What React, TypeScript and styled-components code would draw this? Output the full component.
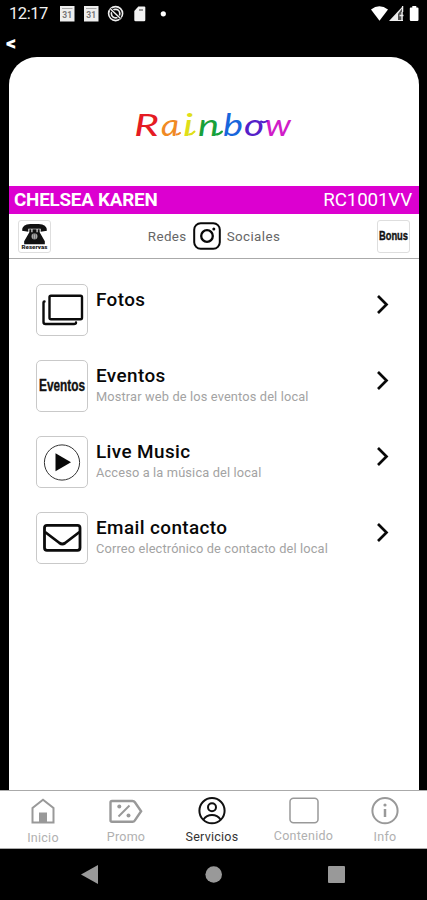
import React from 'react';
import styled, { createGlobalStyle } from 'styled-components';

const GlobalStyle = createGlobalStyle`
  * { box-sizing: border-box; }
  body { margin: 0; background: #000; font-family: Roboto, sans-serif; }
  svg { display: block; flex: none; overflow: visible; }
`;

const Screen = styled.div`
  width: 427px;
  height: 900px;
  display: flex;
  flex-direction: column;
  background: #000;
  overflow: hidden;
`;
const StatusBar = styled.div`
  height: 28px;
  display: flex;
  justify-content: space-between;
  color: #f2f2f2;
`;
const Clock = styled.span`
  width: 51px;
  padding-left: 9px;
  font-size: 16.5px;
  line-height: 28px;
  letter-spacing: -0.45px;
`;
const StatusGroup = styled.div`
  display: flex;
`;
const BackRow = styled.div`
  height: 29px;
  padding-left: 6px;
  color: #fff;
  font-size: 20px;
  font-weight: 900;
  line-height: 30px;
`;
const Card = styled.main`
  flex: 1;
  margin: 0 8px 0 9px;
  background: #fff;
  border-radius: 28px 28px 0 0;
  display: flex;
  flex-direction: column;
  overflow: hidden;
`;
const LogoArea = styled.div`
  height: 129px;
  flex: none;
  display: flex;
  justify-content: center;
  padding-top: 43px;
`;
const Banner = styled.div`
  height: 28px;
  flex: none;
  padding: 0 7px 0 5px;
  display: flex;
  justify-content: space-between;
  background: #dc00d0;
  color: #fff;
  font-size: 18.8px;
  line-height: 28px;
`;
const Member = styled.span`
  font-weight: 700;
  letter-spacing: -0.2px;
`;
const Code = styled.span`
  letter-spacing: -0.15px;
`;
const Social = styled.div`
  height: 45px;
  flex: none;
  padding: 0 9px;
  display: flex;
  align-items: center;
  justify-content: space-between;
  border-bottom: 1px solid #aaa;
`;
const SocialLinks = styled.div`
  display: flex;
  align-items: center;
  gap: 6px;
  color: #666;
  font-size: 13.4px;
  letter-spacing: 0.4px;
`;
const Tile = styled.div<{ $size: number }>`
  width: ${(p) => p.$size}px;
  height: ${(p) => p.$size}px;
  flex: none;
  display: flex;
  align-items: center;
  justify-content: center;
  border: 1px solid ${(p) => (p.$size > 40 ? '#c9c9c9' : '#dedede')};
  border-radius: ${(p) => (p.$size > 40 ? 5 : 3)}px;
`;
const List = styled.div`
  padding: 24.5px 30px 0 26.5px;
  display: flex;
  flex-direction: column;
  gap: 24px;
`;
const Item = styled.div`
  height: 52px;
  display: flex;
`;
const ItemText = styled.div`
  flex: 1;
  padding: 4.5px 0 0 8.5px;
`;
const Title = styled.div`
  font-size: 18.9px;
  line-height: 24px;
  font-weight: 500;
  letter-spacing: 0.4px;
  color: #080808;
`;
const Subtitle = styled.div`
  margin-top: 1px;
  font-size: 12.8px;
  line-height: 16px;
  letter-spacing: 0.15px;
  color: #a3a3a3;
`;
const ChevronBox = styled.div`
  padding-top: 11px;
`;
const Tabs = styled.nav`
  height: 59px;
  flex: none;
  display: grid;
  grid-template-columns: 86px 80px 92px 91px 72px;
  background: #fff;
  border-top: 1px solid #aaa;
  border-bottom: 1px solid #aaa;
`;
const Tab = styled.div<{ $active?: boolean }>`
  display: flex;
  flex-direction: column;
  align-items: center;
  padding-top: 4px;
  color: ${(p) => (p.$active ? '#111' : '#999')};
`;
const TabLabel = styled.span<{ $top: number; $active?: boolean }>`
  margin-top: ${(p) => p.$top}px;
  color: ${(p) => (p.$active ? '#333' : '#b0b0b0')};
  font-size: 12.5px;
  line-height: 15px;
  letter-spacing: 0.25px;
`;
const SystemBar = styled.div`
  height: 51px;
  flex: none;
  background: #000;
`;

/* Letter, colour, left edge, stretched advance */
const logo: [string, string, number, number][] = [
  ['R', '#e51b23', 2, 25], ['a', '#f08a24', 29, 18], ['i', '#e0df18', 51, 10],
  ['n', '#18a13a', 66, 21], ['b', '#1766dc', 91, 20], ['o', '#5520c8', 112, 20], ['w', '#d01cc8', 133, 26],
];

const Logo = () => (
  <svg width="164" height="48" viewBox="0 0 164 48">
    {logo.map(([char, color, x, width]) => (
      <text key={char} x={x} y="35.5" fill={color} fontFamily="Lato, sans-serif" fontStyle="italic"
        fontSize="31" textLength={width} lengthAdjust="spacingAndGlyphs">{char}</text>
    ))}
    <g fill="none" strokeWidth="2" strokeLinecap="round">
      <path d="M44.5 34.5q2 0 3.500-1.500" stroke="#f08a24" />
      <path d="M57 34.500q3 0 5.500-3" stroke="#e0df18" />
      <path d="M83.500 34.500q4 0 6.500-3" stroke="#18a13a" />
      <path d="M129 21.500q3 1.500 6-.5" stroke="#5520c8" />
    </g>
  </svg>
);

const StatusIcons = () => (
  <svg width="120" height="28" viewBox="51 0 120 28">
    {[60, 84].map((x) => (
      <g key={x}>
        <path d={`M${x} 6h14.5v15.5H${x}z`} fill="#eee" />
        <path d={`M${x + 2} 8.5h10.5`} stroke="#aaa" />
        <text x={x + 7.2} y="18" fontSize="8.5" fontWeight="700" fill="#777" textAnchor="middle">31</text>
      </g>
    ))}
    <circle cx="115.6" cy="13.6" r="7" fill="none" stroke="#eee" strokeWidth="1.6" />
    <circle cx="115.6" cy="13.6" r="4.2" fill="none" stroke="#eee" strokeWidth="1.7" />
    <path d="M110.5 9l10 9.5" stroke="#000" strokeWidth="3" />
    <path d="M110.5 9l10 9.5" stroke="#eee" strokeWidth="1.5" />
    <path d="M138.3 6.5h6q1 0 1 1V20q0 1.2-1.2 1.2h-8.5q-1.3 0-1.3-1.2v-9z" fill="#f2f2f2" />
    <path d="M139 10h4" stroke="#666" strokeWidth="1.3" />
    <circle cx="163.3" cy="13.8" r="2.6" fill="#fff" />
  </svg>
);

const SignalIcons = () => (
  <svg width="60" height="28" viewBox="367 0 60 28">
    <path d="M371 9.5Q379.3 2.8 388 9.5L379.5 20.7z" fill="#fff" />
    <path d="M403 6v15h-14z" fill="#eee" />
    <path d="M403 7v13h-5v-6z" fill="#000" opacity=".65" />
    <path d="M402.6 6v6M399.5 15.5h4M402 12v9" stroke="#eee" strokeWidth="1.3" />
    <path d="M412.3 6h4v1.6h1.2q1 0 1 1v11.2q0 1.2-1.2 1.2h-6.3q-1.2 0-1.2-1.2V8.600q0-1 1-1h1.500z" fill="#fff" />
  </svg>
);

const PhoneIcon = () => (
  <svg width="31" height="31" viewBox="0 0 30 30">
    <path d="M3 9.500Q3 3 11 3h8q8 0 8 6.500l-6 .8V7.500H9v2.800z" fill="#111" />
    <path d="M10 8h2v3h1V8h4v3h1V8h2v3l5 8.500v3H5v-3l5-8.500z" fill="#111" />
    <circle cx="15" cy="14.800" r="3" fill="#777" />
    <path d="M13 13v4m2-4v4m2-4v4" stroke="#ccc" strokeWidth=".6" />
    <text x="2.500" y="27.500" fontSize="6" fontWeight="900" textLength="25" lengthAdjust="spacingAndGlyphs" fill="#222">Reservas</text>
  </svg>
);

const WordIcon = ({ word, width, size }: { word: string; width: number; size: number }) => (
  <svg width={width} height="24" viewBox={`0 0 ${width} 24`}>
    <text x="0" y={size > 14 ? 17 : 15.5} fontFamily="Liberation Sans, sans-serif" fontWeight="700" fontSize={size}
      textLength={width} lengthAdjust="spacingAndGlyphs" fill="#111" stroke="#111" strokeWidth=".4">{word}</text>
  </svg>
);

const Instagram = () => (
  <svg width="28" height="28" viewBox="0 0 28 28" fill="none" stroke="#080808" strokeWidth="2">
    <rect x="1.200" y="1.200" width="25.600" height="25.600" rx="6.500" />
    <circle cx="14" cy="14" r="5.800" strokeWidth="2.300" />
    <circle cx="20.800" cy="7" r="1.500" fill="#080808" stroke="none" />
  </svg>
);

const PhotosIcon = () => (
  <svg width="50" height="50" viewBox="0 0 50 50" fill="none" stroke="#0b0b0b" strokeWidth="2.400" strokeLinecap="round">
    <rect x="12.500" y="10.800" width="32.500" height="23.400" rx="1.500" />
    <path d="M7.500 16.500q-1 0-1 1V37q0 2 2 2H37q2 0 2-1.500" />
  </svg>
);
const PlayIcon = () => (
  <svg width="50" height="50" viewBox="0 0 50 50">
    <circle cx="25" cy="25.500" r="17.600" fill="none" stroke="#333" strokeWidth="1" />
    <path d="M18.500 16.200v18L34 25.200z" fill="#080808" />
  </svg>
);
const MailIcon = () => (
  <svg width="50" height="50" viewBox="0 0 50 50" fill="none" stroke="#0b0b0b" strokeWidth="2.800" strokeLinejoin="round">
    <rect x="7.500" y="12.300" width="35.500" height="25" rx="2.500" />
    <path d="M8 19l14.500 11q2.800 2 5.600 0L42.500 19" />
  </svg>
);
const Chevron = () => (
  <svg width="13" height="20" viewBox="0 0 13 20" fill="none" stroke="#080808" strokeWidth="2.700">
    <path d="M2 1l8.500 8.500L2 18" />
  </svg>
);

const TabIcon = ({ kind }: { kind: string }) => (
  <svg width="36" height="32" viewBox="0 0 36 32" fill="none" stroke="currentColor" strokeWidth="2">
    {kind === 'home' && <><path d="M7.500 27.500V13L18 4.700 28.500 13v14.500z" strokeWidth="2" /><path d="M14 17.500h8v10h-8z" fill="currentColor" stroke="none" /></>}
    {kind === 'promo' && <><path d="M4 6h20.500q1.500 0 2.400 1.300l6.200 9-6.200 9q-.9 1.500-2.400 1.500H4q-1.500 0-1.500-1.500V7.500Q2.500 6 4 6z" strokeWidth="2.400" /><path d="M10.500 21.500l11-11" /><circle cx="11.300" cy="11.500" r="2" fill="currentColor" stroke="none" /><circle cx="20.500" cy="20.500" r="2" fill="currentColor" stroke="none" /></>}
    {kind === 'user' && <><circle cx="18" cy="15.700" r="12.600" /><circle cx="18" cy="12.300" r="4" /><path d="M9.500 24.500q3-4.500 8.500-4.500t8.500 4.500" /></>}
    {kind === 'box' && <rect x="4" y="3.300" width="28" height="24.500" rx="3.500" strokeWidth="1.500" />}
    {kind === 'info' && <><circle cx="18" cy="15.700" r="12.600" /><path d="M18 14v8" strokeWidth="2.500" /><circle cx="18" cy="10" r="1.600" fill="currentColor" stroke="none" /></>}
  </svg>
);

const items = [
  { title: 'Fotos', text: '', icon: <PhotosIcon /> },
  { title: 'Eventos', text: 'Mostrar web de los eventos del local', icon: <WordIcon word="Eventos" width={46} size={16.5} /> },
  { title: 'Live Music', text: 'Acceso a la música del local', icon: <PlayIcon /> },
  { title: 'Email contacto', text: 'Correo electrónico de contacto del local', icon: <MailIcon /> },
];
const tabs = [
  { name: 'Inicio', kind: 'home', top: 3 },
  { name: 'Promo', kind: 'promo', top: 2 },
  { name: 'Servicios', kind: 'user', top: 2, active: true },
  { name: 'Contenido', kind: 'box', top: 0.5 },
  { name: 'Info', kind: 'info', top: 2 },
];

export default function App() {
  return (
    <Screen>
      <GlobalStyle />
      <StatusBar>
        <StatusGroup><Clock>12:17</Clock><StatusIcons /></StatusGroup>
        <SignalIcons />
      </StatusBar>
      <BackRow>&lt;</BackRow>
      <Card>
        <LogoArea><Logo /></LogoArea>
        <Banner><Member>CHELSEA KAREN</Member><Code>RC1001VV</Code></Banner>
        <Social>
          <Tile $size={33}><PhoneIcon /></Tile>
          <SocialLinks><span>Redes</span><Instagram /><span>Sociales</span></SocialLinks>
          <Tile $size={33}><WordIcon word="Bonus" width={29} size={12.5} /></Tile>
        </Social>
        <List>
          {items.map((item) => (
            <Item key={item.title}>
              <Tile $size={52}>{item.icon}</Tile>
              <ItemText><Title>{item.title}</Title><Subtitle>{item.text}</Subtitle></ItemText>
              <ChevronBox><Chevron /></ChevronBox>
            </Item>
          ))}
        </List>
      </Card>
      <Tabs>
        {tabs.map((tab) => (
          <Tab key={tab.name} $active={tab.active}>
            <TabIcon kind={tab.kind} />
            <TabLabel $top={tab.top} $active={tab.active}>{tab.name}</TabLabel>
          </Tab>
        ))}
      </Tabs>
      <SystemBar>
        <svg width="427" height="51" viewBox="0 849 427 51" fill="#999">
          <path d="M81 874.500l17-9.500v19z" />
          <circle cx="213.700" cy="874.500" r="8.300" />
          <rect x="328" y="866" width="17" height="17" rx="1" />
        </svg>
      </SystemBar>
    </Screen>
  );
}
